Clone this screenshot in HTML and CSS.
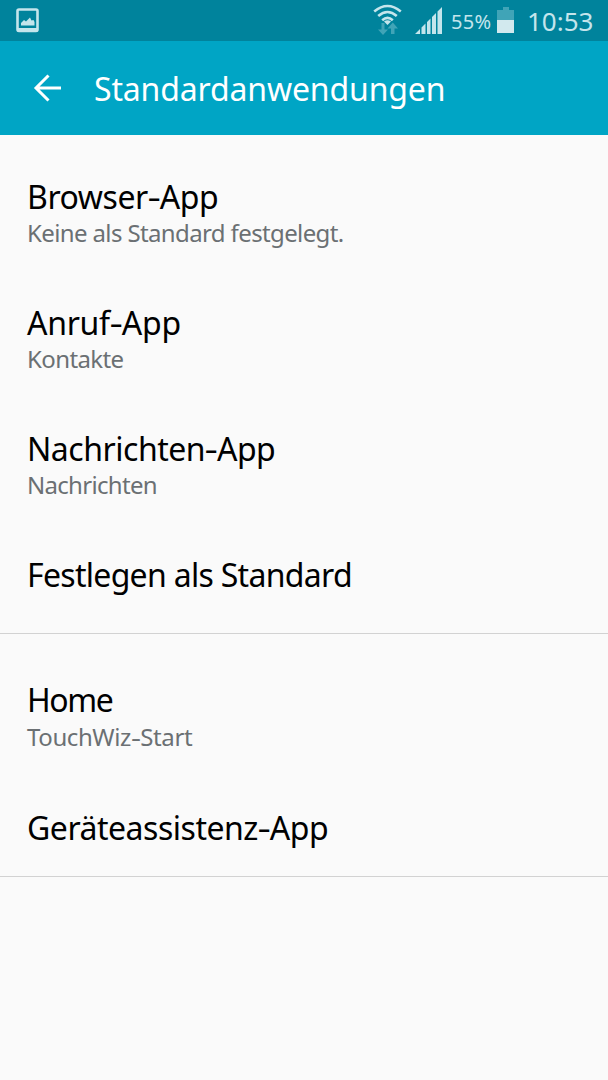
FILE: index.html
```html
<!DOCTYPE html>
<html lang="de">
<head>
<meta charset="utf-8">
<title>Standardanwendungen</title>
<link rel="stylesheet" href="styles.css">
</head>
<body>
<div class="status">
  <svg class="picture" width="24" height="26" viewBox="0 0 24 26"><rect x="1.5" y="1.5" width="20" height="21.5" rx="1.5" fill="none" stroke="#c4e5ec" stroke-width="2.6"/><path d="M1 20h21v3.500H1zM5 17.500v-2.500l3-3 2 1.500 4-4 1.500 3 2-.5 1 2v3.500z" fill="#c4e5ec"/></svg>
  <svg class="wifi" width="30" height="32" viewBox="0 0 30 32"><path d="M8.500 19h3v6.500H15L10 31l-5-5.500h3.500zM18 30h3.500v-5.500H25L19.800 18.500 14.500 24.500H18z" fill="#40a4b7"/><g fill="none" stroke="#c4e5ec" stroke-width="2.600"><path d="M1.200 7.500Q14.500-3.500 27.800 7.500"/><path d="M5.200 12Q14.500 4 23.800 12"/><path d="M9.200 16.200Q14.500 11.500 19.800 16.200"/></g><path d="M11 17.500q3.500-2.500 7 0L14.500 21z" fill="#c4e5ec"/></svg>
  <svg class="signal" width="28" height="28" viewBox="0 0 28 28"><path d="M0 27l5-5v5zM6.500 27v-6.500l4-4V27zM12 27V15l3.500-3.500V27zM17 27V10l4-4v21zM22.500 27V4.500L27 0v27z" fill="#c4e5ec"/></svg>
  <span class="percent">55%</span>
  <svg class="battery" width="18" height="28" viewBox="0 0 18 28"><path d="M6 1h6v3h5v10H0V4h6z" fill="#40a4b7"/><path d="M0 14h17v13H0z" fill="#d2e9ee"/></svg>
  <span class="clock">10:53</span>
</div>
<header class="bar">
  <svg class="back" width="28" height="28" viewBox="0 0 28 28"><path d="M28 14H3M15.500 1.500L3 14l12.500 12.500" fill="none" stroke="#fff" stroke-width="3"/></svg>
  <h1 class="heading">Standardanwendungen</h1>
</header>
<main class="list">
  <section class="group group-apps">
    <div class="item"><div class="name browser">Browser<span class="hyphen">-</span>App</div><div class="detail none">Keine als Standard festgelegt.</div></div>
    <div class="item"><div class="name call">Anruf<span class="hyphen">-</span>App</div><div class="detail contacts">Kontakte</div></div>
    <div class="item"><div class="name messages">Nachrichten<span class="hyphen">-</span>App</div><div class="detail msg">Nachrichten</div></div>
    <div class="item"><div class="name defaults">Festlegen als Standard</div></div>
  </section>
  <section class="group group-system">
    <div class="item"><div class="name home">Home</div><div class="detail touchwiz">TouchWiz<span class="hyphen">-</span>Start</div></div>
    <div class="item"><div class="name assist">Geräteassistenz<span class="hyphen">-</span>App</div></div>
  </section>
</main>
</body>
</html>
```
FILE: styles.css
```css
* { box-sizing: border-box; }
body { margin: 0; min-height: 1080px; background: #fafafa; font-family: "Noto Sans", sans-serif; }
svg { display: block; flex: none; }
.status { display: flex; height: 41px; padding-left: 16px; background: #00839c; color: #c4e5ec; }
.picture { margin-top: 8px; }
.wifi { margin: 4px 0 0 333px; }
.signal { margin: 7px 0 0 12px; }
.percent { width: 46px; margin-left: 8px; font-size: 20px; letter-spacing: .3px; line-height: 43px; white-space: nowrap; }
.battery { margin-top: 6px; }
.clock { margin-left: 12px; font-size: 26px; line-height: 42px; }
.bar { display: flex; height: 94px; padding: 33px 0 0 33px; background: #00a5c5; }
.heading { margin: -7px 0 0 33px; color: #fff; font-size: 32px; font-weight: 400; letter-spacing: -.15px; line-height: 44px; }
.group { border-bottom: 1px solid #d2d2d2; }
.group-apps { height: 499px; padding-top: 13px; }
.group-system { height: 243px; padding-top: 17px; }
.item { min-height: 126px; padding: 27px 0 26px 27px; }
.group-system .item + .item { padding-top: 29px; }
.name { height: 43px; color: #000; font-size: 32px; line-height: 44px; white-space: nowrap; }
.detail { height: 30px; color: #6b7073; font-size: 24px; line-height: 30px; white-space: nowrap; }
.group-system .detail { line-height: 32px; }
.hyphen { display: inline-block; margin: 0 1px; transform: scaleX(1.3); }
.browser { letter-spacing: -.42px; }
.none { letter-spacing: -.62px; }
.call { letter-spacing: -.28px; }
.contacts { letter-spacing: -.6px; }
.messages { letter-spacing: -.48px; }
.msg { letter-spacing: -.7px; }
.defaults { letter-spacing: -.7px; }
.home { letter-spacing: -1.4px; }
.touchwiz { letter-spacing: -.4px; }
.assist { letter-spacing: -.48px; }
```
